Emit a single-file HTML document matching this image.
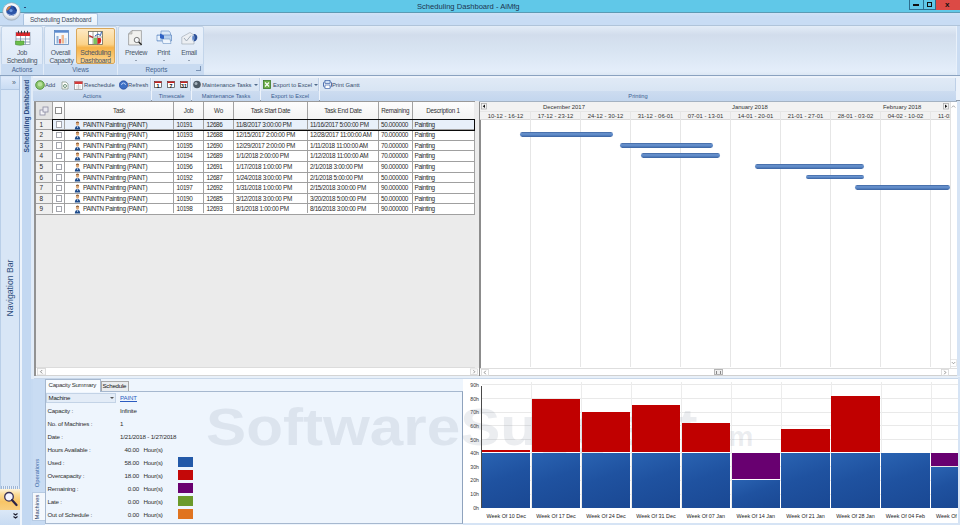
<!DOCTYPE html>
<html><head><meta charset="utf-8">
<style>
*{margin:0;padding:0;box-sizing:border-box}
html,body{width:960px;height:525px;overflow:hidden;background:#d3e3f5;font-family:"Liberation Sans",sans-serif;color:#222}
.a{position:absolute}
#title{left:0;top:0;width:960px;height:13px;background:#60c8e8;border-bottom:1px solid #5b9ab4}
#title .t{left:417px;top:2px;font-size:7.6px;color:#1d3550;white-space:nowrap}
#tabrow{left:0;top:13px;width:960px;height:12px;background:linear-gradient(#d0e2f7,#c8dcf4 30%)}
#ribbon{left:0;top:25px;width:960px;height:51px;background:linear-gradient(#e3ecf7,#d2ddec 18%,#d8e4f2 50%,#e4eefa 92%,#dce7f4);border-top:1px solid #b0c4da;border-bottom:1px solid #8aa2c0}
.grp{background:linear-gradient(#e9f1fb,#dbe7f6);border:1px solid #c3d5ea;border-radius:2px}
.glab{top:64px;height:11px;background:#c9dbf1;font-size:6.3px;color:#46648e;text-align:center;line-height:11px}
.rl{font-size:6.8px;letter-spacing:-.3px;color:#4a5566;text-align:center;white-space:nowrap;line-height:8px}
#nav{left:0;top:76px;width:20px;height:449px;background:#d6e5f6;border-right:1px solid #a9c2e0}
#sdstrip{left:20px;top:76px;width:11px;height:449px;background:#c4d9f2;border-left:1px solid #eef4fb}
#main{left:31px;top:76px;width:929px;height:449px;background:#d8e6f6}
#toolbar{left:33px;top:76px;width:927px;height:25px;background:#edf3fb;border-bottom:1px solid #8e9aa8}
#grid{left:34px;top:101px;width:444px;height:275px;background:#ebebeb;border-left:2px solid #8c8c8c}
#gantt{left:479px;top:101px;width:481px;height:277px;background:#fff}
#bottom{left:31px;top:377px;width:929px;height:148px;background:#eef5fd}
#chart{left:462px;top:379px;width:498px;height:144px;background:#fff}
.tg{top:78px;height:23px;background:linear-gradient(#e0eaf6,#d2e0f1);border-right:1px solid #bed0e7}
.tl{top:91px;height:9.5px;background:linear-gradient(#cddcf0,#c3d6ee);font-size:5.7px;color:#3b5d8f;text-align:center;line-height:10px;white-space:nowrap}
.ti{top:81px;font-size:5.8px;color:#364d6b;white-space:nowrap;line-height:8px}
.dd{top:84px;width:0;height:0;border-left:2px solid transparent;border-right:2px solid transparent;border-top:2px solid #506a8a}
.gh{top:107px;font-size:6.3px;letter-spacing:-.25px;color:#333;text-align:center;white-space:nowrap;line-height:8px}
.gc{font-size:6.4px;color:#2a2a2a;white-space:nowrap;line-height:8px;letter-spacing:-.35px}
.wk{top:111.5px;font-size:5.9px;color:#333;text-align:center;white-space:nowrap;line-height:8px}
.mo{top:102.5px;font-size:5.9px;color:#333;white-space:nowrap;line-height:8px}
.bar{height:4.8px;background:linear-gradient(#3d64a0,#6b95d0 35%,#5a86c4 60%,#3a62a0);border-radius:2.4px}
.bl{font-size:6.2px;letter-spacing:-.2px;line-height:8px;color:#2e2e2e;white-space:nowrap}
.wm{font-size:51px;font-weight:bold;color:rgba(130,140,160,.16);white-space:nowrap;line-height:60px}
.yl{font-size:5.2px;line-height:6px;color:#333;text-align:right;white-space:nowrap}
.xl{font-size:5.4px;line-height:6px;color:#222;text-align:center;white-space:nowrap}
.bb{background:linear-gradient(160deg,#2a63b2,#1f52a0 45%,#1a4893)}
.br{background:#c00000}
.bp{background:#680070}
</style></head><body>
<div id="title" class="a"><div class="a t">Scheduling Dashboard - AiMfg</div>
 <div class="a" style="left:909px;top:0;width:14px;height:10px;border:1px solid #2d6e8e;border-top:0;border-right:0"></div>
 <div class="a" style="left:913px;top:4px;width:6px;height:1.5px;background:#111"></div>
 <div class="a" style="left:923px;top:0;width:13px;height:10px;border:1px solid #2d6e8e;border-top:0"></div>
 <div class="a" style="left:927px;top:2px;width:5px;height:5px;border:1.5px solid #111"></div>
 <div class="a" style="left:936px;top:0;width:24px;height:10px;background:#dc4a45"></div>
 <div class="a" style="left:945px;top:0px;font-size:8px;font-weight:bold;color:#111;line-height:9px">x</div>
 <div class="a" style="left:24px;top:6.5px;width:1.5px;height:1.5px;background:#2a4a78"></div>
</div>
<div id="tabrow" class="a"></div>
<div class="a" style="left:23px;top:13px;width:75px;height:14px;background:linear-gradient(#f6faff,#e6eff9);border:1px solid #a9c3e0;border-bottom:0;border-radius:2px 2px 0 0"></div>
<div class="a" style="left:30px;top:16px;font-size:6.3px;line-height:7px;letter-spacing:-.12px;color:#3a4a60;white-space:nowrap">Scheduling Dashboard</div>
<div id="ribbon" class="a"></div>
<div class="a" style="left:956px;top:26px;width:4px;height:49px;background:#cadcf2;border-left:1px solid #e8f0fa"></div>
<!-- orb -->
<svg class="a" style="left:1.5px;top:1.5px" width="19" height="19" viewBox="0 0 19 19">
 <defs><radialGradient id="orbg" cx="50%" cy="35%" r="65%"><stop offset="0" stop-color="#ffffff"/><stop offset=".7" stop-color="#eef1f5"/><stop offset="1" stop-color="#b5bfca"/></radialGradient></defs>
 <circle cx="9.5" cy="9.5" r="8.8" fill="url(#orbg)" stroke="#98a4b0" stroke-width=".6"/>
 <circle cx="9.5" cy="8.8" r="5.3" fill="#2d55a8"/>
 <path d="M4.5 7.5 C5.5 4.5 8 3.8 9 4 C8 6 6.5 8 4.5 9z" fill="#d8823e"/>
 <path d="M11 4.2 C13.5 5 15 7 14.8 9.5 C13 8.5 11.5 7 11 4.2z" fill="#1a3f8f"/>
 <path d="M5 11 C7 13.5 12 13.5 14 11 C13 14.5 6 14.5 5 11z" fill="#e6eefb"/>
 <circle cx="9" cy="8.5" r="1.6" fill="#6f9ae0"/>
</svg>
<!-- groups -->
<div class="a grp" style="left:1px;top:26px;width:42px;height:49px"></div>
<div class="a grp" style="left:44px;top:26px;width:73px;height:49px"></div>
<div class="a grp" style="left:118px;top:26px;width:86px;height:49px"></div>
<div class="a glab" style="left:1px;width:42px">Actions</div>
<div class="a glab" style="left:44px;width:73px">Views</div>
<div class="a glab" style="left:118px;width:86px;padding-right:9px">Reports</div>
<div class="a" style="left:196px;top:66px;width:5px;height:5px;border-right:1px solid #7a93b5;border-bottom:1px solid #7a93b5"></div>
<!-- scheduling dashboard highlighted -->
<div class="a" style="left:76px;top:28px;width:39px;height:36px;background:linear-gradient(#fde9c4,#fbd38a 45%,#f6b349 55%,#fcd692);border:1px solid #d9a75a;border-radius:2px"></div>
<!-- icons -->
<svg class="a" style="left:15px;top:30px" width="16" height="16" viewBox="0 0 16 16">
 <rect x="1" y="2.5" width="14" height="12" fill="#fff" stroke="#7e8fa4" stroke-width=".7"/>
 <path d="M1 2.5 H15 V6 H1z" fill="#d8262a"/>
 <g fill="#3a3a3a"><rect x="3" y=".8" width="1" height="2.6"/><rect x="6" y=".8" width="1" height="2.6"/><rect x="9" y=".8" width="1" height="2.6"/><rect x="12" y=".8" width="1" height="2.6"/></g>
 <g stroke="#6d86a8" stroke-width=".7"><line x1="1" y1="9" x2="15" y2="9"/><line x1="1" y1="12" x2="15" y2="12"/><line x1="5.5" y1="6" x2="5.5" y2="14.5"/><line x1="10.5" y1="6" x2="10.5" y2="14.5"/></g>
 <path d="M.5 11 H9 V14.5 C7 15.5 3 15.5 .5 14.5z" fill="#6cbd4a" stroke="#3f8a2e" stroke-width=".5"/>
</svg>
<svg class="a" style="left:54px;top:30px" width="15" height="15" viewBox="0 0 15 15">
 <rect x=".5" y=".5" width="14" height="14" fill="#f4f8fc" stroke="#5b85b8" stroke-width=".8"/>
 <rect x=".5" y=".5" width="14" height="2.2" fill="#5a8ad0"/>
 <rect x="2.5" y="6" width="2" height="7.5" fill="#8fb0d8"/><rect x="5" y="9" width="2" height="4.5" fill="#d85a5a"/><rect x="7.5" y="5" width="2.5" height="8.5" fill="#efb990"/><rect x="10.5" y="8" width="2.2" height="5.5" fill="#c8d8e8"/>
</svg>
<svg class="a" style="left:88px;top:31px" width="15" height="14" viewBox="0 0 15 14">
 <rect x=".5" y=".5" width="14" height="13" fill="#fff" stroke="#6d6d5a" stroke-width=".8"/>
 <line x1="5" y1=".5" x2="5" y2="13.5" stroke="#6d6d5a" stroke-width=".6"/>
 <line x1="9.5" y1=".5" x2="9.5" y2="13.5" stroke="#6d6d5a" stroke-width=".6"/>
 <line x1=".5" y1="6" x2="14.5" y2="6" stroke="#6d6d5a" stroke-width=".6"/>
 <path d="M1 5 C2.5 4.5 3.5 6 5 6.5" stroke="#c02020" stroke-width="1.2" fill="none"/>
 <rect x="5.5" y="7" width="3.5" height="6" fill="#7cc25e"/>
 <path d="M9.5 7 H12.5 C13.5 8 13.5 11 12 12.5 L9.5 13z" fill="#d42020"/>
 <path d="M7 5 L10 3 L12.5 4.5 L13.5 .8" stroke="#2a5cb0" stroke-width="1" fill="none"/>
</svg>
<svg class="a" style="left:128px;top:30px" width="16" height="16" viewBox="0 0 16 16">
 <path d="M4 .6 H13.4 V15 H.6 V4 Z" fill="#f1f1ee" stroke="#8e8e8e" stroke-width=".7"/>
 <path d="M.6 4 L4 .6 V4 Z" fill="#d4d4d0" stroke="#8e8e8e" stroke-width=".5"/>
 <circle cx="8.8" cy="10" r="2.6" fill="#f6f8fa" stroke="#555" stroke-width=".8"/>
 <line x1="10.7" y1="11.9" x2="13.6" y2="14.8" stroke="#222" stroke-width="1.4"/>
</svg>
<svg class="a" style="left:155.5px;top:30px" width="17" height="15" viewBox="0 0 17 15">
 <path d="M5 1 H13 L14.5 3 V6 H5z" fill="#dbe9f8" stroke="#5a86c0" stroke-width=".6"/>
 <path d="M1 5 H15.5 V11 H1z" fill="#b9d2ee" stroke="#4f7bb8" stroke-width=".6"/>
 <path d="M4 3.5 L8 5.5 V10 L4 8z" fill="#2f62c4"/>
 <rect x="1.5" y="6" width="2.5" height="4" fill="#e9f2fc"/>
 <path d="M6 9 H14 L15 13.5 H7z" fill="#eef5fd" stroke="#6d94c4" stroke-width=".6"/>
</svg>
<svg class="a" style="left:181px;top:31px" width="17" height="14" viewBox="0 0 17 14">
 <path d="M.8 6 L9 1.5 L13 4 V13 H.8z" fill="#eceff3" stroke="#9aa4ae" stroke-width=".6"/>
 <path d="M3 7 L5.5 10 L10 4.5" fill="none" stroke="#9aa6b2" stroke-width=".9"/>
 <path d="M12.5 3 C15.5 3 16.5 5 16.3 7 C16 9.5 14 10.5 12.5 10.5 C13.5 9 13.8 5 12.5 3z" fill="#2a4f98"/>
 <path d="M12 4 C13.5 5 13.5 8.5 12 10 C11 9 11 5 12 4z" fill="#5d86cc"/>
</svg>
<div class="a rl" style="left:1px;top:49px;width:42px">Job</div>
<div class="a rl" style="left:1px;top:57px;width:42px">Scheduling</div>
<div class="a rl" style="left:44px;top:49px;width:33px">Overall</div>
<div class="a rl" style="left:44px;top:57px;width:35px">Capacity</div>
<div class="a rl" style="left:76px;top:49px;width:39px">Scheduling</div>
<div class="a rl" style="left:76px;top:57px;width:39px">Dashboard</div>
<div class="a rl" style="left:122px;top:49px;width:28px">Preview</div>
<div class="a rl" style="left:150px;top:49px;width:27px">Print</div>
<div class="a rl" style="left:176px;top:49px;width:26px">Email</div>
<div class="a" style="left:134.5px;top:59.5px;width:0;height:0;border-left:1.5px solid transparent;border-right:1.5px solid transparent;border-top:1.6px solid #4a5a70"></div>
<div class="a" style="left:162.5px;top:59.5px;width:0;height:0;border-left:1.5px solid transparent;border-right:1.5px solid transparent;border-top:1.6px solid #4a5a70"></div>
<div class="a" style="left:187.5px;top:59.5px;width:0;height:0;border-left:1.5px solid transparent;border-right:1.5px solid transparent;border-top:1.6px solid #4a5a70"></div>
<div class="a" style="left:0;top:76px;width:960px;height:449px;background:#d6e4f5"></div>
<!-- nav bar -->
<div class="a" style="left:0;top:76px;width:20px;height:449px;background:#d8e6f6;border-left:1px solid #b9cfe8;border-right:1px solid #a8c0de"></div>
<div class="a" style="left:1px;top:77px;width:18px;height:13px;background:linear-gradient(#dfeafa,#c9dcf3);border-bottom:1px solid #b3c9e4"></div>
<div class="a" style="left:12px;top:79px;font-size:7px;color:#4a5f7a;line-height:8px">&raquo;</div>
<div class="a" style="left:-19px;top:284px;width:58px;height:8px;transform:rotate(-90deg);font-size:8.7px;line-height:8px;color:#2f4f7e;white-space:nowrap;text-align:center">Navigation Bar</div>
<!-- nav bottom -->
<div class="a" style="left:1px;top:486px;width:18px;height:3px;background:repeating-linear-gradient(90deg,#9db6d6 0 1px,#e6eef8 1px 2px)"></div>
<div class="a" style="left:0;top:489px;width:20px;height:21px;background:linear-gradient(#fdf3dc,#fbdb98 25%,#f8c566 60%,#f9cf80)"></div>
<svg class="a" style="left:2px;top:491px" width="16" height="16" viewBox="0 0 16 16"><circle cx="7" cy="5.8" r="4.3" fill="#f4f4ff" stroke="#3b3358" stroke-width="1.3"/><line x1="10" y1="9" x2="14.5" y2="14" stroke="#2c2446" stroke-width="2.2" stroke-linecap="round"/></svg>
<div class="a" style="left:0;top:510px;width:20px;height:15px;background:linear-gradient(#dbe8f7,#c8dbf2)"></div>
<svg class="a" style="left:13px;top:513px" width="5" height="7" viewBox="0 0 5 7"><path d="M.5 .5 L2.5 2 L4.5 .5 M.5 3.5 L2.5 5 L4.5 3.5" fill="none" stroke="#1a1a2a" stroke-width="1.1"/></svg>
<!-- SD strip -->
<div class="a" style="left:20px;top:76px;width:2px;height:449px;background:#eef4fb"></div>
<div class="a" style="left:22px;top:76px;width:8.5px;height:449px;background:#c3d8f1"></div>
<div class="a" style="left:30.5px;top:76px;width:3px;height:449px;background:#e2ecf8"></div>
<div class="a" style="left:-10.5px;top:112px;width:74px;height:8px;transform:rotate(-90deg);font-size:6.7px;font-weight:bold;line-height:8px;color:#2d4d82;white-space:nowrap;text-align:center">Scheduling Dashboard</div>
<div id="toolbar" class="a"></div>
<div class="a tg" style="left:33px;width:118px"></div>
<div class="a tg" style="left:152px;width:39px"></div>
<div class="a tg" style="left:192px;width:68px"></div>
<div class="a tg" style="left:261px;width:58px"></div>
<div class="a tg" style="left:320px;width:636px"></div>
<div class="a tl" style="left:33px;width:118px">Actions</div>
<div class="a tl" style="left:152px;width:39px">Timescale</div>
<div class="a tl" style="left:192px;width:68px">Maintenance Tasks</div>
<div class="a tl" style="left:261px;width:58px">Export to Excel</div>
<div class="a tl" style="left:320px;width:636px">Printing</div>
<!-- add -->
<svg class="a" style="left:35px;top:80px" width="10" height="10" viewBox="0 0 10 10"><circle cx="5" cy="5" r="4.3" fill="#8bc46a" stroke="#4f8e3a" stroke-width=".9"/><circle cx="5" cy="4.2" r="2.2" fill="#b8e09c"/></svg>
<div class="a ti" style="left:45px">Add</div>
<svg class="a" style="left:61px;top:80px" width="8" height="10" viewBox="0 0 8 10"><path d="M1 2 h4 l2 2 v5 h-6z" fill="#fff" stroke="#8a9a8a" stroke-width=".8"/><circle cx="4" cy="6" r="1.5" fill="none" stroke="#4a7a5a" stroke-width=".8"/></svg>
<svg class="a" style="left:74px;top:80px" width="9" height="10" viewBox="0 0 9 10"><rect x=".5" y="1.5" width="8" height="8" fill="#fff" stroke="#8a8a8a" stroke-width=".7"/><rect x=".5" y="1.5" width="8" height="2.5" fill="#d43a3a"/><path d="M2 6h5M2 8h5M4.5 4v5" stroke="#aaa" stroke-width=".5"/></svg>
<div class="a ti" style="left:84px">Reschedule</div>
<svg class="a" style="left:119px;top:80px" width="9" height="10" viewBox="0 0 9 10"><circle cx="4.5" cy="5" r="4.2" fill="#3d6fc4" stroke="#26479a" stroke-width=".7"/><path d="M2.5 5a2 2 0 0 1 4 0" fill="none" stroke="#cfe0ff" stroke-width=".8"/></svg>
<div class="a ti" style="left:128px">Refresh</div>
<svg class="a" style="left:154px;top:81px" width="8" height="7" viewBox="0 0 16 14"><rect x="1" y="1" width="14" height="12" fill="#fff" stroke="#333" stroke-width="1.3"/><rect x="1" y="1" width="14" height="3" fill="#c41f1f"/><text x="8" y="13" font-size="10.5" font-weight="bold" text-anchor="middle" fill="#111" font-family="Liberation Sans">1</text></svg>
<svg class="a" style="left:167px;top:81px" width="8" height="7" viewBox="0 0 16 14"><rect x="1" y="1" width="14" height="12" fill="#fff" stroke="#333" stroke-width="1.3"/><rect x="1" y="1" width="14" height="3" fill="#c41f1f"/><text x="8" y="13" font-size="10.5" font-weight="bold" text-anchor="middle" fill="#111" font-family="Liberation Sans">7</text></svg>
<svg class="a" style="left:180px;top:81px" width="8" height="7" viewBox="0 0 16 14"><rect x="1" y="1" width="14" height="12" fill="#fff" stroke="#333" stroke-width="1.3"/><rect x="1" y="1" width="14" height="3" fill="#c41f1f"/><text x="8" y="13" font-size="10.5" font-weight="bold" text-anchor="middle" fill="#111" font-family="Liberation Sans">31</text></svg>
<svg class="a" style="left:193px;top:80px" width="8" height="9" viewBox="0 0 8 9"><circle cx="4" cy="4.5" r="3.8" fill="#4d5a66"/><circle cx="3" cy="3.5" r="1.5" fill="#a8b4be"/></svg>
<div class="a ti" style="left:202px">Maintenance Tasks</div>
<div class="a dd" style="left:254px"></div>
<svg class="a" style="left:263px;top:80px" width="8" height="9" viewBox="0 0 8 9"><rect x=".5" y=".5" width="7" height="8" fill="#6fb04a" stroke="#3b7a2a" stroke-width=".8"/><path d="M2 2.5l4 4M6 2.5l-4 4" stroke="#fff" stroke-width="1.1"/></svg>
<div class="a ti" style="left:273px">Export to Excel</div>
<div class="a dd" style="left:314px"></div>
<svg class="a" style="left:323px;top:80px" width="9" height="9" viewBox="0 0 9 9"><rect x=".5" y="2" width="8" height="5" rx="1" fill="#fff" stroke="#3f63a8" stroke-width=".9"/><rect x="2" y=".5" width="5" height="3" fill="#cfe0f4" stroke="#3f63a8" stroke-width=".7"/><rect x="2" y="5" width="5" height="3.5" fill="#fff" stroke="#3f63a8" stroke-width=".7"/></svg>
<div class="a ti" style="left:332px">Print Gantt</div>
<div class="a" style="left:34px;top:101px;width:445px;height:275px;background:#ebebeb"></div>
<div class="a" style="left:34px;top:101px;width:1.5px;height:275px;background:#929292"></div>
<div class="a" style="left:34px;top:101px;width:445px;height:1px;background:#9a9a9a"></div>
<div class="a" style="left:52.5px;top:102px;width:421.5px;height:16.5px;background:linear-gradient(#fdfdfd,#f3f3f3)"></div>
<div class="a" style="left:35.5px;top:102px;width:17px;height:16.5px;background:#e3e3e3"></div>
<div class="a" style="left:35.5px;top:119.3px;width:17px;height:94.95px;background:#efefef"></div>
<div class="a" style="left:52.5px;top:119.3px;width:421.5px;height:94.95px;background:#fff"></div>
<div class="a" style="left:52.5px;top:119.3px;width:421.5px;height:10.55px;background:#e8f0fa"></div>
<div class="a" style="left:52.0px;top:102px;width:1px;height:111.45px;background:#a2a2a2"></div>
<div class="a" style="left:64.0px;top:102px;width:1px;height:111.45px;background:#a2a2a2"></div>
<div class="a" style="left:173.0px;top:102px;width:1px;height:111.45px;background:#a2a2a2"></div>
<div class="a" style="left:203.0px;top:102px;width:1px;height:111.45px;background:#a2a2a2"></div>
<div class="a" style="left:233.0px;top:102px;width:1px;height:111.45px;background:#a2a2a2"></div>
<div class="a" style="left:307.0px;top:102px;width:1px;height:111.45px;background:#a2a2a2"></div>
<div class="a" style="left:378.0px;top:102px;width:1px;height:111.45px;background:#a2a2a2"></div>
<div class="a" style="left:411.5px;top:102px;width:1px;height:111.45px;background:#a2a2a2"></div>
<div class="a" style="left:473.5px;top:119.3px;width:1px;height:94.95px;background:#a2a2a2"></div>
<div class="a" style="left:35.5px;top:119px;width:439px;height:1px;background:#a0a0a0"></div>
<div class="a" style="left:35.5px;top:129px;width:439px;height:1px;background:#a0a0a0"></div>
<div class="a" style="left:35.5px;top:140px;width:439px;height:1px;background:#a0a0a0"></div>
<div class="a" style="left:35.5px;top:150px;width:439px;height:1px;background:#a0a0a0"></div>
<div class="a" style="left:35.5px;top:161px;width:439px;height:1px;background:#a0a0a0"></div>
<div class="a" style="left:35.5px;top:172px;width:439px;height:1px;background:#a0a0a0"></div>
<div class="a" style="left:35.5px;top:182px;width:439px;height:1px;background:#a0a0a0"></div>
<div class="a" style="left:35.5px;top:193px;width:439px;height:1px;background:#a0a0a0"></div>
<div class="a" style="left:35.5px;top:203px;width:439px;height:1px;background:#a0a0a0"></div>
<div class="a" style="left:35.5px;top:214px;width:439px;height:1px;background:#a0a0a0"></div>
<div class="a gh" style="left:64.5px;width:109.0px">Task</div>
<div class="a gh" style="left:173.5px;width:30.0px">Job</div>
<div class="a gh" style="left:203.5px;width:30.0px">Wo</div>
<div class="a gh" style="left:233.5px;width:74.0px">Task Start Date</div>
<div class="a gh" style="left:307.5px;width:71.0px">Task End Date</div>
<div class="a gh" style="left:378.5px;width:33.5px">Remaining</div>
<div class="a gh" style="left:412px;width:62px">Description 1</div>
<div class="a" style="left:54.5px;top:107px;width:7px;height:7px;border:1px solid #8a8a8a;background:#fff"></div>
<svg class="a" style="left:39px;top:105.5px" width="10" height="10" viewBox="0 0 10 10"><rect x="1" y="4" width="5" height="5" fill="#f4f4f8" stroke="#8a8aa0" stroke-width=".8"/><rect x="4" y="1" width="5" height="5" fill="#e8e8f0" stroke="#8a8aa0" stroke-width=".8"/></svg>
<div class="a gc" style="left:39.5px;top:120.8px">1</div>
<div class="a" style="left:55.5px;top:121.3px;width:6.8px;height:6.5px;border:1px solid #a4a6ae;background:#fff"></div>
<svg class="a" style="left:74px;top:120.6px" width="7" height="9" viewBox="0 0 7 9"><ellipse cx="3.5" cy="2.7" rx="1.6" ry="2.1" fill="#dca878"/><path d="M1.9 2.2 C1.9 .4 5.1 .4 5.1 2.2 C4.5 1.5 2.5 1.5 1.9 2.2z" fill="#8a5a34"/><path d="M.8 8.6 C.8 6.2 2 5.1 3.5 5.1 S6.2 6.2 6.2 8.6z" fill="#1f4c8c"/><path d="M3.1 5.2 h.8 l-.1 1.8 h-.6z" fill="#e8eef8"/></svg>
<div class="a gc" style="left:83px;top:120.8px">PAINTN Painting (PAINT)</div>
<div class="a gc" style="left:176.5px;top:120.8px">10191</div>
<div class="a gc" style="left:206.5px;top:120.8px">12686</div>
<div class="a gc" style="left:236px;top:120.8px">11/8/2017 3:00:00 PM</div>
<div class="a gc" style="left:310px;top:120.8px">11/16/2017 5:00:00 PM</div>
<div class="a gc" style="left:381px;top:120.8px">50.000000</div>
<div class="a gc" style="left:414.5px;top:120.8px">Painting</div>
<div class="a gc" style="left:39.5px;top:131.35px">2</div>
<div class="a" style="left:55.5px;top:131.85px;width:6.8px;height:6.5px;border:1px solid #a4a6ae;background:#fff"></div>
<svg class="a" style="left:74px;top:131.15px" width="7" height="9" viewBox="0 0 7 9"><ellipse cx="3.5" cy="2.7" rx="1.6" ry="2.1" fill="#dca878"/><path d="M1.9 2.2 C1.9 .4 5.1 .4 5.1 2.2 C4.5 1.5 2.5 1.5 1.9 2.2z" fill="#8a5a34"/><path d="M.8 8.6 C.8 6.2 2 5.1 3.5 5.1 S6.2 6.2 6.2 8.6z" fill="#1f4c8c"/><path d="M3.1 5.2 h.8 l-.1 1.8 h-.6z" fill="#e8eef8"/></svg>
<div class="a gc" style="left:83px;top:131.35px">PAINTN Painting (PAINT)</div>
<div class="a gc" style="left:176.5px;top:131.35px">10193</div>
<div class="a gc" style="left:206.5px;top:131.35px">12688</div>
<div class="a gc" style="left:236px;top:131.35px">12/15/2017 2:00:00 PM</div>
<div class="a gc" style="left:310px;top:131.35px">12/28/2017 11:00:00 AM</div>
<div class="a gc" style="left:381px;top:131.35px">70.000000</div>
<div class="a gc" style="left:414.5px;top:131.35px">Painting</div>
<div class="a gc" style="left:39.5px;top:141.9px">3</div>
<div class="a" style="left:55.5px;top:142.4px;width:6.8px;height:6.5px;border:1px solid #a4a6ae;background:#fff"></div>
<svg class="a" style="left:74px;top:141.70000000000002px" width="7" height="9" viewBox="0 0 7 9"><ellipse cx="3.5" cy="2.7" rx="1.6" ry="2.1" fill="#dca878"/><path d="M1.9 2.2 C1.9 .4 5.1 .4 5.1 2.2 C4.5 1.5 2.5 1.5 1.9 2.2z" fill="#8a5a34"/><path d="M.8 8.6 C.8 6.2 2 5.1 3.5 5.1 S6.2 6.2 6.2 8.6z" fill="#1f4c8c"/><path d="M3.1 5.2 h.8 l-.1 1.8 h-.6z" fill="#e8eef8"/></svg>
<div class="a gc" style="left:83px;top:141.9px">PAINTN Painting (PAINT)</div>
<div class="a gc" style="left:176.5px;top:141.9px">10195</div>
<div class="a gc" style="left:206.5px;top:141.9px">12690</div>
<div class="a gc" style="left:236px;top:141.9px">12/29/2017 2:00:00 PM</div>
<div class="a gc" style="left:310px;top:141.9px">1/11/2018 11:00:00 AM</div>
<div class="a gc" style="left:381px;top:141.9px">70.000000</div>
<div class="a gc" style="left:414.5px;top:141.9px">Painting</div>
<div class="a gc" style="left:39.5px;top:152.45px">4</div>
<div class="a" style="left:55.5px;top:152.95px;width:6.8px;height:6.5px;border:1px solid #a4a6ae;background:#fff"></div>
<svg class="a" style="left:74px;top:152.25px" width="7" height="9" viewBox="0 0 7 9"><ellipse cx="3.5" cy="2.7" rx="1.6" ry="2.1" fill="#dca878"/><path d="M1.9 2.2 C1.9 .4 5.1 .4 5.1 2.2 C4.5 1.5 2.5 1.5 1.9 2.2z" fill="#8a5a34"/><path d="M.8 8.6 C.8 6.2 2 5.1 3.5 5.1 S6.2 6.2 6.2 8.6z" fill="#1f4c8c"/><path d="M3.1 5.2 h.8 l-.1 1.8 h-.6z" fill="#e8eef8"/></svg>
<div class="a gc" style="left:83px;top:152.45px">PAINTN Painting (PAINT)</div>
<div class="a gc" style="left:176.5px;top:152.45px">10194</div>
<div class="a gc" style="left:206.5px;top:152.45px">12689</div>
<div class="a gc" style="left:236px;top:152.45px">1/1/2018 2:00:00 PM</div>
<div class="a gc" style="left:310px;top:152.45px">1/12/2018 11:00:00 AM</div>
<div class="a gc" style="left:381px;top:152.45px">70.000000</div>
<div class="a gc" style="left:414.5px;top:152.45px">Painting</div>
<div class="a gc" style="left:39.5px;top:163.0px">5</div>
<div class="a" style="left:55.5px;top:163.5px;width:6.8px;height:6.5px;border:1px solid #a4a6ae;background:#fff"></div>
<svg class="a" style="left:74px;top:162.8px" width="7" height="9" viewBox="0 0 7 9"><ellipse cx="3.5" cy="2.7" rx="1.6" ry="2.1" fill="#dca878"/><path d="M1.9 2.2 C1.9 .4 5.1 .4 5.1 2.2 C4.5 1.5 2.5 1.5 1.9 2.2z" fill="#8a5a34"/><path d="M.8 8.6 C.8 6.2 2 5.1 3.5 5.1 S6.2 6.2 6.2 8.6z" fill="#1f4c8c"/><path d="M3.1 5.2 h.8 l-.1 1.8 h-.6z" fill="#e8eef8"/></svg>
<div class="a gc" style="left:83px;top:163.0px">PAINTN Painting (PAINT)</div>
<div class="a gc" style="left:176.5px;top:163.0px">10196</div>
<div class="a gc" style="left:206.5px;top:163.0px">12691</div>
<div class="a gc" style="left:236px;top:163.0px">1/17/2018 1:00:00 PM</div>
<div class="a gc" style="left:310px;top:163.0px">2/1/2018 3:00:00 PM</div>
<div class="a gc" style="left:381px;top:163.0px">90.000000</div>
<div class="a gc" style="left:414.5px;top:163.0px">Painting</div>
<div class="a gc" style="left:39.5px;top:173.55px">6</div>
<div class="a" style="left:55.5px;top:174.05px;width:6.8px;height:6.5px;border:1px solid #a4a6ae;background:#fff"></div>
<svg class="a" style="left:74px;top:173.35000000000002px" width="7" height="9" viewBox="0 0 7 9"><ellipse cx="3.5" cy="2.7" rx="1.6" ry="2.1" fill="#dca878"/><path d="M1.9 2.2 C1.9 .4 5.1 .4 5.1 2.2 C4.5 1.5 2.5 1.5 1.9 2.2z" fill="#8a5a34"/><path d="M.8 8.6 C.8 6.2 2 5.1 3.5 5.1 S6.2 6.2 6.2 8.6z" fill="#1f4c8c"/><path d="M3.1 5.2 h.8 l-.1 1.8 h-.6z" fill="#e8eef8"/></svg>
<div class="a gc" style="left:83px;top:173.55px">PAINTN Painting (PAINT)</div>
<div class="a gc" style="left:176.5px;top:173.55px">10192</div>
<div class="a gc" style="left:206.5px;top:173.55px">12687</div>
<div class="a gc" style="left:236px;top:173.55px">1/24/2018 3:00:00 PM</div>
<div class="a gc" style="left:310px;top:173.55px">2/1/2018 5:00:00 PM</div>
<div class="a gc" style="left:381px;top:173.55px">50.000000</div>
<div class="a gc" style="left:414.5px;top:173.55px">Painting</div>
<div class="a gc" style="left:39.5px;top:184.1px">7</div>
<div class="a" style="left:55.5px;top:184.6px;width:6.8px;height:6.5px;border:1px solid #a4a6ae;background:#fff"></div>
<svg class="a" style="left:74px;top:183.9px" width="7" height="9" viewBox="0 0 7 9"><ellipse cx="3.5" cy="2.7" rx="1.6" ry="2.1" fill="#dca878"/><path d="M1.9 2.2 C1.9 .4 5.1 .4 5.1 2.2 C4.5 1.5 2.5 1.5 1.9 2.2z" fill="#8a5a34"/><path d="M.8 8.6 C.8 6.2 2 5.1 3.5 5.1 S6.2 6.2 6.2 8.6z" fill="#1f4c8c"/><path d="M3.1 5.2 h.8 l-.1 1.8 h-.6z" fill="#e8eef8"/></svg>
<div class="a gc" style="left:83px;top:184.1px">PAINTN Painting (PAINT)</div>
<div class="a gc" style="left:176.5px;top:184.1px">10197</div>
<div class="a gc" style="left:206.5px;top:184.1px">12692</div>
<div class="a gc" style="left:236px;top:184.1px">1/31/2018 1:00:00 PM</div>
<div class="a gc" style="left:310px;top:184.1px">2/15/2018 3:00:00 PM</div>
<div class="a gc" style="left:381px;top:184.1px">90.000000</div>
<div class="a gc" style="left:414.5px;top:184.1px">Painting</div>
<div class="a gc" style="left:39.5px;top:194.65px">8</div>
<div class="a" style="left:55.5px;top:195.15px;width:6.8px;height:6.5px;border:1px solid #a4a6ae;background:#fff"></div>
<svg class="a" style="left:74px;top:194.45000000000002px" width="7" height="9" viewBox="0 0 7 9"><ellipse cx="3.5" cy="2.7" rx="1.6" ry="2.1" fill="#dca878"/><path d="M1.9 2.2 C1.9 .4 5.1 .4 5.1 2.2 C4.5 1.5 2.5 1.5 1.9 2.2z" fill="#8a5a34"/><path d="M.8 8.6 C.8 6.2 2 5.1 3.5 5.1 S6.2 6.2 6.2 8.6z" fill="#1f4c8c"/><path d="M3.1 5.2 h.8 l-.1 1.8 h-.6z" fill="#e8eef8"/></svg>
<div class="a gc" style="left:83px;top:194.65px">PAINTN Painting (PAINT)</div>
<div class="a gc" style="left:176.5px;top:194.65px">10190</div>
<div class="a gc" style="left:206.5px;top:194.65px">12685</div>
<div class="a gc" style="left:236px;top:194.65px">3/12/2018 3:00:00 PM</div>
<div class="a gc" style="left:310px;top:194.65px">3/20/2018 5:00:00 PM</div>
<div class="a gc" style="left:381px;top:194.65px">50.000000</div>
<div class="a gc" style="left:414.5px;top:194.65px">Painting</div>
<div class="a gc" style="left:39.5px;top:205.2px">9</div>
<div class="a" style="left:55.5px;top:205.7px;width:6.8px;height:6.5px;border:1px solid #a4a6ae;background:#fff"></div>
<svg class="a" style="left:74px;top:205.0px" width="7" height="9" viewBox="0 0 7 9"><ellipse cx="3.5" cy="2.7" rx="1.6" ry="2.1" fill="#dca878"/><path d="M1.9 2.2 C1.9 .4 5.1 .4 5.1 2.2 C4.5 1.5 2.5 1.5 1.9 2.2z" fill="#8a5a34"/><path d="M.8 8.6 C.8 6.2 2 5.1 3.5 5.1 S6.2 6.2 6.2 8.6z" fill="#1f4c8c"/><path d="M3.1 5.2 h.8 l-.1 1.8 h-.6z" fill="#e8eef8"/></svg>
<div class="a gc" style="left:83px;top:205.2px">PAINTN Painting (PAINT)</div>
<div class="a gc" style="left:176.5px;top:205.2px">10198</div>
<div class="a gc" style="left:206.5px;top:205.2px">12693</div>
<div class="a gc" style="left:236px;top:205.2px">8/1/2018 1:00:00 PM</div>
<div class="a gc" style="left:310px;top:205.2px">8/16/2018 3:00:00 PM</div>
<div class="a gc" style="left:381px;top:205.2px">90.000000</div>
<div class="a gc" style="left:414.5px;top:205.2px">Painting</div>
<div class="a" style="left:52px;top:119px;width:423px;height:12px;border:1.6px solid #0a0a0a"></div>
<div class="a" style="left:35.5px;top:367px;width:443px;height:9px;background:#fff;border-top:1px solid #dcdcdc;border-bottom:1px solid #d4d4d4"></div>
<svg class="a" style="left:37px;top:368px" width="9" height="7.5" viewBox="0 0 18 15"><rect x="1" y="1" width="16" height="13" fill="#fafafa" stroke="#d0d0d0" stroke-width="1.5"/><path d="M10.5 4 L7 7.5 L10.5 11" fill="none" stroke="#666" stroke-width="1.4"/></svg>
<svg class="a" style="left:469.5px;top:368px" width="8" height="7.5" viewBox="0 0 18 15"><rect x="1" y="1" width="16" height="13" fill="#fafafa" stroke="#d0d0d0" stroke-width="1.5"/><path d="M7.5 4 L11 7.5 L7.5 11" fill="none" stroke="#666" stroke-width="1.4"/></svg>
<div class="a" style="left:475px;top:101px;width:4px;height:267px;background:#ececec"></div>
<div class="a" style="left:479px;top:101px;width:478px;height:277px;background:#fff"></div>
<div class="a" style="left:479px;top:101px;width:1.5px;height:275px;background:#8c8c8c"></div>
<div class="a" style="left:479px;top:101px;width:478px;height:1px;background:#a4b2c2"></div>
<div class="a" style="left:480px;top:102px;width:470px;height:17.5px;background:#f2f2f2"></div>
<div class="a" style="left:480px;top:119px;width:470px;height:1px;background:#d8d8d8"></div>
<div class="a wk" style="left:480.5px;width:50px">10-12 - 16-12</div>
<div class="a" style="left:530px;top:111px;width:1px;height:256px;background:#e6e6e6"></div>
<div class="a wk" style="left:530.5px;width:50px">17-12 - 23-12</div>
<div class="a" style="left:580px;top:111px;width:1px;height:256px;background:#e6e6e6"></div>
<div class="a wk" style="left:580.5px;width:50px">24-12 - 30-12</div>
<div class="a" style="left:630px;top:111px;width:1px;height:256px;background:#e6e6e6"></div>
<div class="a wk" style="left:630.5px;width:50px">31-12 - 06-01</div>
<div class="a" style="left:680px;top:111px;width:1px;height:256px;background:#e6e6e6"></div>
<div class="a wk" style="left:680.5px;width:50px">07-01 - 13-01</div>
<div class="a" style="left:730px;top:111px;width:1px;height:256px;background:#e6e6e6"></div>
<div class="a wk" style="left:730.5px;width:50px">14-01 - 20-01</div>
<div class="a" style="left:780px;top:111px;width:1px;height:256px;background:#e6e6e6"></div>
<div class="a wk" style="left:780.5px;width:50px">21-01 - 27-01</div>
<div class="a" style="left:830px;top:111px;width:1px;height:256px;background:#e6e6e6"></div>
<div class="a wk" style="left:830.5px;width:50px">28-01 - 03-02</div>
<div class="a" style="left:880px;top:111px;width:1px;height:256px;background:#e6e6e6"></div>
<div class="a wk" style="left:880.5px;width:50px">04-02 - 10-02</div>
<div class="a" style="left:930px;top:111px;width:1px;height:256px;background:#e6e6e6"></div>
<div class="a wk" style="left:930.5px;width:50px">11-02 - 17-02</div>
<div class="a" style="left:480px;top:110.5px;width:470px;height:1px;background:#e6e6e6"></div>
<div class="a mo" style="left:543px">December 2017</div>
<div class="a mo" style="left:732px">January 2018</div>
<div class="a mo" style="left:883px">February 2018</div>
<svg class="a" style="left:480.5px;top:103.3px" width="6" height="6.5" viewBox="0 0 12 13"><rect x="1" y="1" width="10" height="11" fill="#f4f4f4" stroke="#aaa" stroke-width="1.5"/><path d="M3.5 6.5 L8 3 V10z" fill="#111"/></svg>
<svg class="a" style="left:943px;top:103.3px" width="6" height="6.5" viewBox="0 0 12 13"><rect x="1" y="1" width="10" height="11" fill="#f4f4f4" stroke="#aaa" stroke-width="1.5"/><path d="M8.5 6.5 L4 3 V10z" fill="#111"/></svg>
<div class="a bar" style="left:519.5px;top:132.325px;width:93.20000000000005px"></div>
<div class="a bar" style="left:619.7px;top:142.875px;width:93.0px"></div>
<div class="a bar" style="left:641px;top:153.42499999999998px;width:78.5px"></div>
<div class="a bar" style="left:755px;top:163.975px;width:109.29999999999995px"></div>
<div class="a bar" style="left:805.7px;top:174.525px;width:58.799999999999955px"></div>
<div class="a bar" style="left:855px;top:185.075px;width:94.5px"></div>
<div class="a" style="left:949.5px;top:102px;width:7.5px;height:266px;background:#fff;border-left:1px solid #e2e2e2"></div>
<svg class="a" style="left:950px;top:103px" width="7" height="7" viewBox="0 0 14 14"><path d="M3.5 9 L7 5.5 L10.5 9" fill="none" stroke="#777" stroke-width="1.3"/></svg>
<svg class="a" style="left:950px;top:358.5px" width="7" height="8" viewBox="0 0 14 16"><rect x="1" y="1" width="12" height="14" fill="#fff" stroke="#ddd" stroke-width="1.3"/><path d="M3.5 6 L7 9.5 L10.5 6" fill="none" stroke="#777" stroke-width="1.3"/></svg>
<div class="a" style="left:480px;top:367.5px;width:477px;height:8px;background:#fff;border-top:1px solid #dedede;border-bottom:1px solid #d0d0d0"></div>
<svg class="a" style="left:481px;top:368.5px" width="8" height="7" viewBox="0 0 16 14"><rect x="1" y="1" width="14" height="12" fill="#fff" stroke="#d4d4d4" stroke-width="1.5"/><path d="M9.5 3.5 L6.5 7 L9.5 10.5" fill="none" stroke="#666" stroke-width="1.4"/></svg>
<svg class="a" style="left:941px;top:368.5px" width="8" height="7" viewBox="0 0 16 14"><rect x="1" y="1" width="14" height="12" fill="#fff" stroke="#d4d4d4" stroke-width="1.5"/><path d="M6.5 3.5 L9.5 7 L6.5 10.5" fill="none" stroke="#666" stroke-width="1.4"/></svg>
<div class="a" style="left:714px;top:369px;width:9px;height:6px;border:1px solid #b4b4b4;background:#eee"></div>
<div class="a" style="left:716px;top:370.5px;width:5px;height:3px;border-left:1px solid #888;border-right:1px solid #888"></div>
<div class="a" style="left:957px;top:101px;width:3px;height:277px;background:#d6e4f5"></div>
<div class="a" style="left:33.5px;top:376px;width:926.5px;height:2.5px;background:#e8f0f9;border-bottom:1px solid #c8d7e9"></div>
<div class="a" style="left:30.5px;top:378.5px;width:929.5px;height:146.5px;background:#eef5fd"></div>
<div class="a" style="left:30.5px;top:378.5px;width:14px;height:146.5px;background:#c6daf2"></div>
<div class="a" style="left:32.5px;top:378.5px;width:12px;height:113.5px;background:#c9dcf3"></div>
<div class="a" style="left:32px;top:492px;width:12.5px;height:29px;background:#f4f8fd;border:1px solid #b7cbe3;border-right:0"></div>
<div class="a" style="left:19px;top:469px;width:36px;height:8px;transform:rotate(-90deg);font-size:5.8px;line-height:8px;color:#3f6aa8;white-space:nowrap;text-align:center">Operations</div>
<div class="a" style="left:21px;top:502.5px;width:32px;height:8px;transform:rotate(-90deg);font-size:5.8px;line-height:8px;color:#2a3f66;white-space:nowrap;text-align:center">Machines</div>
<div class="a" style="left:44.5px;top:390.5px;width:418px;height:133px;background:#eef5fd;border:1px solid #a6b8cf;border-right:1px solid #8fa3bd"></div>
<div class="a" style="left:44.5px;top:379px;width:56px;height:12.5px;background:#f7fbff;border:1px solid #a6b8cf;border-bottom:0"></div>
<div class="a" style="left:100.5px;top:380.5px;width:28px;height:10px;background:#e9ecef;border:1px solid #a8a8a8;border-bottom:0"></div>
<div class="a" style="left:48.5px;top:381px;font-size:6.1px;letter-spacing:-.25px;line-height:8px;color:#333;white-space:nowrap">Capacity Summary</div>
<div class="a" style="left:102.5px;top:381.5px;font-size:6.1px;letter-spacing:-.2px;line-height:8px;color:#111;white-space:nowrap">Schedule</div>
<div class="a" style="left:46px;top:392.5px;width:69.5px;height:10px;background:#e3ecf7;border:1px solid #c3d3e6"></div>
<div class="a" style="left:48.5px;top:393.5px;font-size:6.1px;letter-spacing:-.2px;line-height:8px;color:#222;white-space:nowrap">Machine</div>
<div class="a" style="left:109.5px;top:397px;width:0;height:0;border-left:2px solid transparent;border-right:2px solid transparent;border-top:2px solid #555"></div>
<div class="a" style="left:120px;top:393.5px;font-size:6.1px;letter-spacing:-.1px;line-height:8px;color:#2b5bc0;white-space:nowrap;text-decoration:underline">PAINT</div>
<div class="a bl" style="left:47.5px;top:406.7px">Capacity :</div>
<div class="a bl" style="left:120px;top:406.7px">Infinite</div>
<div class="a bl" style="left:47.5px;top:419.7px">No. of Machines :</div>
<div class="a bl" style="left:120px;top:419.7px">1</div>
<div class="a bl" style="left:47.5px;top:432.7px">Date :</div>
<div class="a bl" style="left:120px;top:432.7px">1/21/2018 - 1/27/2018</div>
<div class="a bl" style="left:47.5px;top:445.7px">Hours Available :</div>
<div class="a bl" style="left:100px;width:39px;text-align:right;top:445.7px">40.00</div>
<div class="a bl" style="left:143.5px;top:445.7px">Hour(s)</div>
<div class="a bl" style="left:47.5px;top:458.7px">Used :</div>
<div class="a bl" style="left:100px;width:39px;text-align:right;top:458.7px">58.00</div>
<div class="a bl" style="left:143.5px;top:458.7px">Hour(s)</div>
<div class="a" style="left:177.5px;top:457.4px;width:15px;height:10px;background:#2359a8"></div>
<div class="a bl" style="left:47.5px;top:471.7px">Overcapacity :</div>
<div class="a bl" style="left:100px;width:39px;text-align:right;top:471.7px">18.00</div>
<div class="a bl" style="left:143.5px;top:471.7px">Hour(s)</div>
<div class="a" style="left:177.5px;top:470.4px;width:15px;height:10px;background:#c40808"></div>
<div class="a bl" style="left:47.5px;top:484.7px">Remaining :</div>
<div class="a bl" style="left:100px;width:39px;text-align:right;top:484.7px">0.00</div>
<div class="a bl" style="left:143.5px;top:484.7px">Hour(s)</div>
<div class="a" style="left:177.5px;top:483.4px;width:15px;height:10px;background:#6a0070"></div>
<div class="a bl" style="left:47.5px;top:497.7px">Late :</div>
<div class="a bl" style="left:100px;width:39px;text-align:right;top:497.7px">0.00</div>
<div class="a bl" style="left:143.5px;top:497.7px">Hour(s)</div>
<div class="a" style="left:177.5px;top:496.4px;width:15px;height:10px;background:#6b9a2a"></div>
<div class="a bl" style="left:47.5px;top:510.70000000000005px">Out of Schedule :</div>
<div class="a bl" style="left:100px;width:39px;text-align:right;top:510.70000000000005px">0.00</div>
<div class="a bl" style="left:143.5px;top:510.70000000000005px">Hour(s)</div>
<div class="a" style="left:177.5px;top:509.40000000000003px;width:15px;height:10px;background:#e07420"></div>
<div class="a" style="left:463px;top:379px;width:497px;height:144px;background:#fff"></div>
<div class="a" style="left:481.5px;top:493.64px;width:478px;height:1px;background:#e9e9e9"></div>
<div class="a" style="left:481.5px;top:479.98px;width:478px;height:1px;background:#e9e9e9"></div>
<div class="a" style="left:481.5px;top:466.32px;width:478px;height:1px;background:#e9e9e9"></div>
<div class="a" style="left:481.5px;top:452.66px;width:478px;height:1px;background:#e9e9e9"></div>
<div class="a" style="left:481.5px;top:439.0px;width:478px;height:1px;background:#e9e9e9"></div>
<div class="a" style="left:481.5px;top:425.34000000000003px;width:478px;height:1px;background:#e9e9e9"></div>
<div class="a" style="left:481.5px;top:411.68px;width:478px;height:1px;background:#e9e9e9"></div>
<div class="a" style="left:481.5px;top:398.02px;width:478px;height:1px;background:#e9e9e9"></div>
<div class="a" style="left:481.5px;top:384.36px;width:478px;height:1px;background:#e9e9e9"></div>
<div class="a" style="left:530.5px;top:382.128px;width:1px;height:125.67200000000001px;background:#ececec"></div>
<div class="a" style="left:580.5px;top:382.128px;width:1px;height:125.67200000000001px;background:#ececec"></div>
<div class="a" style="left:630.5px;top:382.128px;width:1px;height:125.67200000000001px;background:#ececec"></div>
<div class="a" style="left:680.5px;top:382.128px;width:1px;height:125.67200000000001px;background:#ececec"></div>
<div class="a" style="left:730.5px;top:382.128px;width:1px;height:125.67200000000001px;background:#ececec"></div>
<div class="a" style="left:780.5px;top:382.128px;width:1px;height:125.67200000000001px;background:#ececec"></div>
<div class="a" style="left:830.5px;top:382.128px;width:1px;height:125.67200000000001px;background:#ececec"></div>
<div class="a" style="left:880.5px;top:382.128px;width:1px;height:125.67200000000001px;background:#ececec"></div>
<div class="a" style="left:930.5px;top:382.128px;width:1px;height:125.67200000000001px;background:#ececec"></div>
<div class="a yl" style="left:464px;width:15px;top:504.8px">0h</div>
<div class="a yl" style="left:464px;width:15px;top:491.14px">10h</div>
<div class="a yl" style="left:464px;width:15px;top:477.48px">20h</div>
<div class="a yl" style="left:464px;width:15px;top:463.82px">30h</div>
<div class="a yl" style="left:464px;width:15px;top:450.16px">40h</div>
<div class="a yl" style="left:464px;width:15px;top:436.5px">50h</div>
<div class="a yl" style="left:464px;width:15px;top:422.84000000000003px">60h</div>
<div class="a yl" style="left:464px;width:15px;top:409.18px">70h</div>
<div class="a yl" style="left:464px;width:15px;top:395.52px">80h</div>
<div class="a yl" style="left:464px;width:15px;top:381.86px">90h</div>
<div class="a wm" style="left:205.5px;top:398px;transform:scaleX(1.18);transform-origin:0 0">SoftwareSuggest</div><div class="a wm" style="left:688px;top:398px;font-size:28px;line-height:60px;padding-top:8.5px">.com</div>
<div class="a" style="left:481px;top:385.86px;width:1px;height:121.94000000000001px;background:#4a4a4a"></div>
<div class="a bb" style="left:482.0px;top:453.16px;width:48.4px;height:54.639999999999986px"></div>
<div class="a br" style="left:482.0px;top:450.428px;width:48.4px;height:1.7320000000000002px"></div>
<div class="a xl" style="left:477.0px;width:58.4px;top:513px">Week Of 10 Dec</div>
<div class="a bb" style="left:531.9px;top:453.16px;width:48.4px;height:54.639999999999986px"></div>
<div class="a br" style="left:531.9px;top:398.52px;width:48.4px;height:53.64px"></div>
<div class="a xl" style="left:526.9px;width:58.4px;top:513px">Week Of 17 Dec</div>
<div class="a bb" style="left:581.8px;top:453.16px;width:48.4px;height:54.639999999999986px"></div>
<div class="a br" style="left:581.8px;top:412.18px;width:48.4px;height:39.980000000000004px"></div>
<div class="a xl" style="left:576.8px;width:58.4px;top:513px">Week Of 24 Dec</div>
<div class="a bb" style="left:631.7px;top:453.16px;width:48.4px;height:54.639999999999986px"></div>
<div class="a br" style="left:631.7px;top:405.35px;width:48.4px;height:46.81px"></div>
<div class="a xl" style="left:626.7px;width:58.4px;top:513px">Week Of 31 Dec</div>
<div class="a bb" style="left:681.6px;top:453.16px;width:48.4px;height:54.639999999999986px"></div>
<div class="a br" style="left:681.6px;top:423.108px;width:48.4px;height:29.052000000000003px"></div>
<div class="a xl" style="left:676.6px;width:58.4px;top:513px">Week Of 07 Jan</div>
<div class="a bb" style="left:731.5px;top:480.48px;width:48.4px;height:27.319999999999993px"></div>
<div class="a bp" style="left:731.5px;top:453.16px;width:48.4px;height:26.32px"></div>
<div class="a xl" style="left:726.5px;width:58.4px;top:513px">Week Of 14 Jan</div>
<div class="a bb" style="left:781.4px;top:453.16px;width:48.4px;height:54.639999999999986px"></div>
<div class="a br" style="left:781.4px;top:428.572px;width:48.4px;height:23.588px"></div>
<div class="a xl" style="left:776.4px;width:58.4px;top:513px">Week Of 21 Jan</div>
<div class="a bb" style="left:831.3px;top:453.16px;width:48.4px;height:54.639999999999986px"></div>
<div class="a br" style="left:831.3px;top:395.788px;width:48.4px;height:56.37200000000001px"></div>
<div class="a xl" style="left:826.3px;width:58.4px;top:513px">Week Of 28 Jan</div>
<div class="a bb" style="left:881.2px;top:453.16px;width:48.4px;height:54.639999999999986px"></div>
<div class="a xl" style="left:876.2px;width:58.4px;top:513px">Week Of 04 Feb</div>
<div class="a bb" style="left:931.0999999999999px;top:466.82px;width:27px;height:40.98000000000002px"></div>
<div class="a bp" style="left:931.0999999999999px;top:453.16px;width:27px;height:12.66px"></div>
<div class="a xl" style="left:926.0999999999999px;width:58.5px;top:513px">Week Of 11 Feb</div>
<div class="a" style="left:958px;top:377px;width:2px;height:148px;background:#d6e4f5"></div>
<div class="a" style="left:463px;top:523px;width:497px;height:2px;background:#d6e4f5"></div>
</body></html>
